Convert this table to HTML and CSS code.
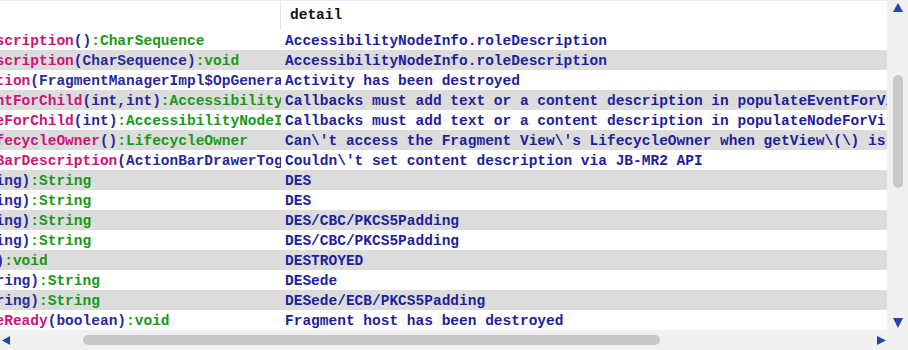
FILE: index.html
```html
<!DOCTYPE html>
<html lang="en">
<head>
    <meta charset="UTF-8">
    <title>String search</title>
    <link rel="stylesheet" href="styles.css">
</head>
<body>
    <div class="table">
        <div class="view">
            <div class="head">
                <div class="name"></div>
                <div class="detail">detail</div>
            </div>
            <div class="row">
                <div class="name"><span class="m">scription</span><span class="p">()</span><span class="t">:CharSequence</span></div>
                <div class="detail">AccessibilityNodeInfo.roleDescription</div>
            </div>
            <div class="row">
                <div class="name"><span class="m">scription</span><span class="p">(CharSequence)</span><span class="t">:void</span></div>
                <div class="detail">AccessibilityNodeInfo.roleDescription</div>
            </div>
            <div class="row">
                <div class="name"><span class="m">tion</span><span class="p">(FragmentManagerImpl$OpGenerator)</span><span class="t">:void</span></div>
                <div class="detail">Activity has been destroyed</div>
            </div>
            <div class="row">
                <div class="name"><span class="m">ntForChild</span><span class="p">(int,int)</span><span class="t">:AccessibilityEvent</span></div>
                <div class="detail">Callbacks must add text or a content description in populateEventForVirtualViewId()</div>
            </div>
            <div class="row">
                <div class="name"><span class="m">eForChild</span><span class="p">(int)</span><span class="t">:AccessibilityNodeInfoCompat</span></div>
                <div class="detail">Callbacks must add text or a content description in populateNodeForVirtualViewId()</div>
            </div>
            <div class="row">
                <div class="name"><span class="m">fecycleOwner</span><span class="p">()</span><span class="t">:LifecycleOwner</span></div>
                <div class="detail">Can\'t access the Fragment View\'s LifecycleOwner when getView\(\) is null</div>
            </div>
            <div class="row">
                <div class="name"><span class="m">BarDescription</span><span class="p">(ActionBarDrawerToggle$Delegate,int)</span><span class="t">:void</span></div>
                <div class="detail">Couldn\'t set content description via JB-MR2 API</div>
            </div>
            <div class="row">
                <div class="name"><span class="p">ing)</span><span class="t">:String</span></div>
                <div class="detail">DES</div>
            </div>
            <div class="row">
                <div class="name"><span class="p">ing)</span><span class="t">:String</span></div>
                <div class="detail">DES</div>
            </div>
            <div class="row">
                <div class="name"><span class="p">ing)</span><span class="t">:String</span></div>
                <div class="detail">DES/CBC/PKCS5Padding</div>
            </div>
            <div class="row">
                <div class="name"><span class="p">ing)</span><span class="t">:String</span></div>
                <div class="detail">DES/CBC/PKCS5Padding</div>
            </div>
            <div class="row">
                <div class="name"><span class="p">)</span><span class="t">:void</span></div>
                <div class="detail">DESTROYED</div>
            </div>
            <div class="row">
                <div class="name"><span class="p">ring)</span><span class="t">:String</span></div>
                <div class="detail">DESede</div>
            </div>
            <div class="row">
                <div class="name"><span class="p">ring)</span><span class="t">:String</span></div>
                <div class="detail">DESede/ECB/PKCS5Padding</div>
            </div>
            <div class="row">
                <div class="name"><span class="m">eReady</span><span class="p">(boolean)</span><span class="t">:void</span></div>
                <div class="detail">Fragment host has been destroyed</div>
            </div>

            <!-- horizontal scrollbar -->
            <div class="hbar">
                <svg class="arrow" width="8" height="9" viewBox="0 0 8 9"><polygon points="8,0 8,9 0,4.5"/></svg>
                <div class="track"><div class="thumb"></div></div>
                <svg class="arrow" width="10" height="9" viewBox="0 0 10 9"><polygon points="0,0 9,4.5 0,9"/></svg>
            </div>
        </div>

        <!-- vertical scrollbar -->
        <div class="vbar">
            <svg class="arrow up" width="10" height="9" viewBox="0 0 10 9"><polygon points="5,0 10,9 0,9"/></svg>
            <div class="vthumb"></div>
            <svg class="arrow down" width="10" height="10" viewBox="0 0 10 10"><polygon points="0,0 10,0 5,10"/></svg>
        </div>
    </div>
</body>
</html>
```

FILE: styles.css
```css
body {
    margin: 0;
    background-color: #f0f0f0;
    font-family: "Liberation Mono", "DejaVu Sans Mono", monospace;
    font-size: 14.5px;
    font-weight: bold;
}
.table {
    display: flex;
    width: 908px;
    height: 350px;
}
.view {
    width: 887px;
    display: flex;
    flex-direction: column;
}
.head,
.row {
    display: flex;
    white-space: nowrap;
    background-color: white;
    box-sizing: border-box;
}
.head {
    height: 30px;
    line-height: 29px;
    border-top: 1px solid #ececec;
}
.row {
    height: 20px;
    padding-top: 1px;
    line-height: 20px;
}
.row:nth-child(odd) {
    background-color: #dcdcdc;
}
.name {
    width: 281px;
    flex-shrink: 0;
    overflow: hidden;
    text-indent: -4.5px;
}
.head .name {
    border-right: 1px solid #e4e4e4;
    width: 280px;
}
.detail {
    flex: 1;
    overflow: hidden;
    padding-left: 4px;
    color: #1e1ea0;
}
.head .detail {
    color: #111;
    padding-left: 9px;
}
.m {
    color: #d0127a;
}
.p {
    color: #28289e;
}
.t {
    color: #169a16;
}
.arrow {
    fill: #1d47a0;
    flex-shrink: 0;
}
.hbar {
    height: 20px;
    display: flex;
    align-items: center;
    padding-left: 2px;
}
.track {
    flex: 1;
}
.thumb {
    margin-left: 73px;
    width: 577px;
    height: 10px;
    border-radius: 5px;
    background-color: #c8c8c8;
}
.vbar {
    width: 21px;
    display: flex;
    flex-direction: column;
    align-items: center;
    padding-top: 3px;
}
.vthumb {
    margin-top: 63px;
    width: 10px;
    height: 113px;
    border-radius: 5px;
    background-color: #c8c8c8;
}
.down {
    margin-top: 130px;
}
```
